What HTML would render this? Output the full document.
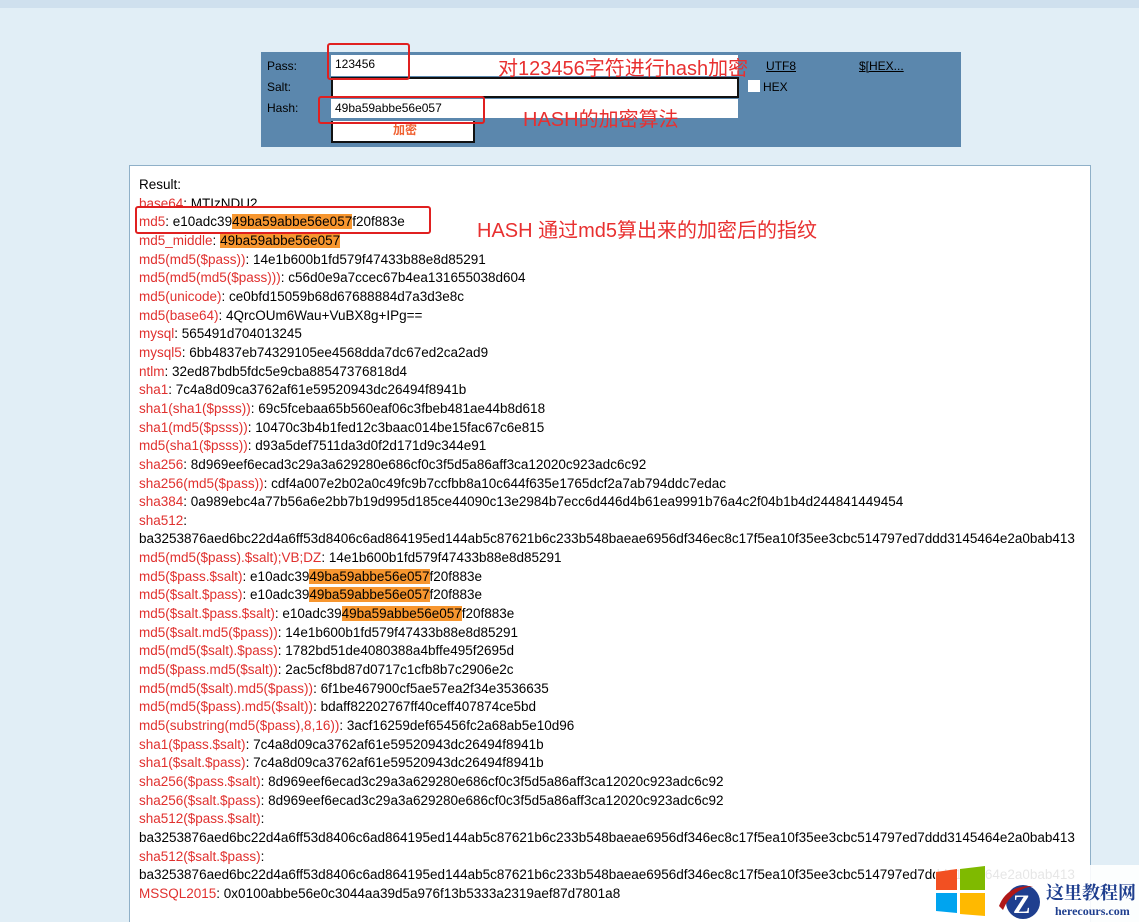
<!DOCTYPE html>
<html><head><meta charset="utf-8"><style>
html,body{margin:0;width:1139px;height:922px;overflow:hidden}
body{background:#e1eef6;font-family:"Liberation Sans","DejaVu Sans",sans-serif;position:relative}
.top{position:absolute;left:0;top:0;width:1139px;height:8px;background:#cfe0ee}
.panel{position:absolute;left:261px;top:52px;width:700px;height:95px;background:#5b87ad;font-size:12px;color:#000}
.lbl{position:absolute;left:6px}
.inp{position:absolute;background:#fff;border:1px solid #ccc;box-sizing:border-box;font-size:12px;padding-left:4px;line-height:18px}
.red{position:absolute;border:2px solid #e02020;border-radius:3px;box-sizing:border-box}
.note{position:absolute;color:#e83030;font-family:"Liberation Sans","Noto Sans CJK SC",sans-serif;white-space:nowrap}
.res{position:absolute;left:129px;top:165px;width:962px;height:757px;background:#fff;border:1px solid #8fb0c8;border-bottom:none;box-sizing:border-box;font-size:13.5px;line-height:18.66px;padding:10px 0 0 9px;color:#000;white-space:nowrap;overflow:hidden}
.k{color:#e0302e}
.h{background:#f7962f}
</style></head><body>
<div class="top"></div>
<div class="panel">
<div class="lbl" style="top:7px">Pass:</div>
<div class="lbl" style="top:28px">Salt:</div>
<div class="lbl" style="top:49px">Hash:</div>
<div class="inp" style="left:70px;top:3px;width:407px;height:21px;border:none">123456</div>
<div class="inp" style="left:70px;top:25px;width:408px;height:21px;border:2px solid #111"></div>
<div class="inp" style="left:70px;top:47px;width:407px;height:19px;border:none">49ba59abbe56e057</div>
<div class="inp" style="left:70px;top:69px;width:144px;height:22px;border:2px solid #111;border-top:none;text-align:center;color:#f06030;font-family:'Liberation Sans','Noto Sans CJK SC',sans-serif;font-weight:bold">加密</div>
<div style="position:absolute;left:487px;top:28px;width:12px;height:12px;background:#fff"></div>
<div class="lbl" style="left:502px;top:28px">HEX</div>
<div class="lbl" style="left:505px;top:7px;text-decoration:underline">UTF8</div>
<div class="lbl" style="left:598px;top:7px;text-decoration:underline">$[HEX...</div>
</div>
<div class="red" style="left:327px;top:43px;width:83px;height:37px"></div>
<div class="red" style="left:318px;top:96px;width:167px;height:28px"></div>
<div class="note" style="left:498px;top:52px;font-size:20px">对123456字符进行hash加密</div>
<div class="note" style="left:523px;top:103px;font-size:20px">HASH的加密算法</div>
<div class="res">
Result:<br>
<span class="k">base64</span>: MTIzNDU2<br>
<span class="k">md5</span>: e10adc39<span class="h">49ba59abbe56e057</span>f20f883e<br>
<span class="k">md5_middle</span>: <span class="h">49ba59abbe56e057</span><br>
<span class="k">md5(md5($pass))</span>: 14e1b600b1fd579f47433b88e8d85291<br>
<span class="k">md5(md5(md5($pass)))</span>: c56d0e9a7ccec67b4ea131655038d604<br>
<span class="k">md5(unicode)</span>: ce0bfd15059b68d67688884d7a3d3e8c<br>
<span class="k">md5(base64)</span>: 4QrcOUm6Wau+VuBX8g+IPg==<br>
<span class="k">mysql</span>: 565491d704013245<br>
<span class="k">mysql5</span>: 6bb4837eb74329105ee4568dda7dc67ed2ca2ad9<br>
<span class="k">ntlm</span>: 32ed87bdb5fdc5e9cba88547376818d4<br>
<span class="k">sha1</span>: 7c4a8d09ca3762af61e59520943dc26494f8941b<br>
<span class="k">sha1(sha1($psss))</span>: 69c5fcebaa65b560eaf06c3fbeb481ae44b8d618<br>
<span class="k">sha1(md5($psss))</span>: 10470c3b4b1fed12c3baac014be15fac67c6e815<br>
<span class="k">md5(sha1($psss))</span>: d93a5def7511da3d0f2d171d9c344e91<br>
<span class="k">sha256</span>: 8d969eef6ecad3c29a3a629280e686cf0c3f5d5a86aff3ca12020c923adc6c92<br>
<span class="k">sha256(md5($pass))</span>: cdf4a007e2b02a0c49fc9b7ccfbb8a10c644f635e1765dcf2a7ab794ddc7edac<br>
<span class="k">sha384</span>: 0a989ebc4a77b56a6e2bb7b19d995d185ce44090c13e2984b7ecc6d446d4b61ea9991b76a4c2f04b1b4d244841449454<br>
<span class="k">sha512</span>:<br>
ba3253876aed6bc22d4a6ff53d8406c6ad864195ed144ab5c87621b6c233b548baeae6956df346ec8c17f5ea10f35ee3cbc514797ed7ddd3145464e2a0bab413<br>
<span class="k">md5(md5($pass).$salt);VB;DZ</span>: 14e1b600b1fd579f47433b88e8d85291<br>
<span class="k">md5($pass.$salt)</span>: e10adc39<span class="h">49ba59abbe56e057</span>f20f883e<br>
<span class="k">md5($salt.$pass)</span>: e10adc39<span class="h">49ba59abbe56e057</span>f20f883e<br>
<span class="k">md5($salt.$pass.$salt)</span>: e10adc39<span class="h">49ba59abbe56e057</span>f20f883e<br>
<span class="k">md5($salt.md5($pass))</span>: 14e1b600b1fd579f47433b88e8d85291<br>
<span class="k">md5(md5($salt).$pass)</span>: 1782bd51de4080388a4bffe495f2695d<br>
<span class="k">md5($pass.md5($salt))</span>: 2ac5cf8bd87d0717c1cfb8b7c2906e2c<br>
<span class="k">md5(md5($salt).md5($pass))</span>: 6f1be467900cf5ae57ea2f34e3536635<br>
<span class="k">md5(md5($pass).md5($salt))</span>: bdaff82202767ff40ceff407874ce5bd<br>
<span class="k">md5(substring(md5($pass),8,16))</span>: 3acf16259def65456fc2a68ab5e10d96<br>
<span class="k">sha1($pass.$salt)</span>: 7c4a8d09ca3762af61e59520943dc26494f8941b<br>
<span class="k">sha1($salt.$pass)</span>: 7c4a8d09ca3762af61e59520943dc26494f8941b<br>
<span class="k">sha256($pass.$salt)</span>: 8d969eef6ecad3c29a3a629280e686cf0c3f5d5a86aff3ca12020c923adc6c92<br>
<span class="k">sha256($salt.$pass)</span>: 8d969eef6ecad3c29a3a629280e686cf0c3f5d5a86aff3ca12020c923adc6c92<br>
<span class="k">sha512($pass.$salt)</span>:<br>
ba3253876aed6bc22d4a6ff53d8406c6ad864195ed144ab5c87621b6c233b548baeae6956df346ec8c17f5ea10f35ee3cbc514797ed7ddd3145464e2a0bab413<br>
<span class="k">sha512($salt.$pass)</span>:<br>
ba3253876aed6bc22d4a6ff53d8406c6ad864195ed144ab5c87621b6c233b548baeae6956df346ec8c17f5ea10f35ee3cbc514797ed7ddd3145464e2a0bab413<br>
<span class="k">MSSQL2015</span>: 0x0100abbe56e0c3044aa39d5a976f13b5333a2319aef87d7801a8
</div>
<div class="red" style="left:135px;top:206px;width:296px;height:28px"></div>
<div class="note" style="left:477px;top:214px;font-size:20px">HASH 通过md5算出来的加密后的指纹</div>
<div style="position:absolute;left:1091px;top:840px;width:48px;height:82px;background:#e1eef6"></div>
<div style="position:absolute;left:935px;top:865px;width:204px;height:57px;background:rgba(255,255,255,.9)"></div>
<svg style="position:absolute;left:935px;top:866px" width="54" height="50">
<polygon points="1,6 22,3 22,24 1,24" fill="#f25022"/>
<polygon points="25,3 50,0 50,24 25,24" fill="#7fba00"/>
<polygon points="1,27 22,27 22,47 1,45" fill="#00a4ef"/>
<polygon points="25,27 50,27 50,50 25,48" fill="#ffb900"/>
</svg>
<svg style="position:absolute;left:993px;top:880px" width="56" height="42">
<circle cx="30" cy="22" r="17" fill="#1f3f8f"/>
<path d="M6 26 Q14 5 40 6 Q18 10 10 30 Z" fill="#b01818"/>
<text x="20" y="33" font-size="26" font-weight="bold" fill="#fff" font-family="Liberation Serif,serif">Z</text>
</svg>
<div style="position:absolute;left:1046px;top:879px;font-size:18px;font-weight:bold;color:#1f3f8f;white-space:nowrap;font-family:'Liberation Serif','Noto Serif CJK SC',serif">这里教程网</div>
<div style="position:absolute;left:1055px;top:904px;font-size:12px;font-weight:bold;color:#1f3f8f;white-space:nowrap;font-family:'Liberation Serif',serif">herecours.com</div>
</body></html>
